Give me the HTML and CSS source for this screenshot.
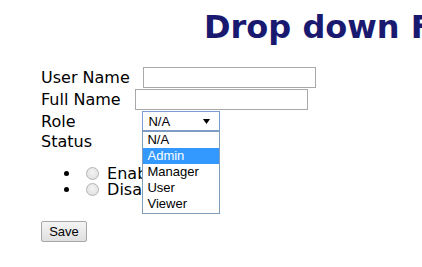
FILE: index.html
```html
<!DOCTYPE html>
<html>
<head>
<meta charset="utf-8">
<link rel="stylesheet" href="styles.css">
</head>
<body>
<div class="page">
  <h1 class="title">Drop down Form Example</h1>
  <form class="form">
    <div class="row">
      <span class="label">User Name</span>
      <input class="text-input in-user" type="text">
    </div>
    <div class="row">
      <span class="label">Full Name</span>
      <input class="text-input in-full" type="text">
    </div>
    <div class="row">
      <span class="label">Role</span>
      <div class="select-wrap">
        <div class="select">
          <span class="select-value">N/A</span>
          <svg class="select-arrow" width="7" height="5" viewBox="0 0 7 5"><polygon points="0,0 7,0 3.5,5" fill="#000"/></svg>
        </div>
        <ul class="listbox">
          <li class="option">N/A</li>
          <li class="option option-active">Admin</li>
          <li class="option">Manager</li>
          <li class="option">User</li>
          <li class="option">Viewer</li>
        </ul>
      </div>
    </div>
    <div class="row row-status">
      <span class="label">Status</span>
    </div>
    <ul class="status-list">
      <li class="status-item"><input class="radio" type="radio" name="status"> Enabled</li>
      <li class="status-item"><input class="radio" type="radio" name="status"> Disabled</li>
    </ul>
    <button class="save" type="button">Save</button>
  </form>
</div>
</body>
</html>
```

FILE: styles.css
```css
html, body {
  margin: 0;
  padding: 0;
  background: #fff;
}
body {
  font-family: "DejaVu Sans", Verdana, sans-serif;
  font-size: 16px;
  color: #000;
  overflow: hidden;
  width: 422px;
  height: 267px;
}
.page {
  padding-top: 8px;
  overflow: hidden;
}
.title {
  margin: 0;
  padding-left: 204px;
  font-size: 32px;
  font-weight: bold;
  color: #191970;
  white-space: nowrap;
  line-height: normal;
}
.form {
  margin: 20px 0 0 0;
  padding-left: 41px;
}
.row {
  display: flex;
  align-items: center;
  height: 22px;
}
.row-status {
  height: 18px;
}
.label {
  white-space: nowrap;
}
.text-input {
  box-sizing: border-box;
  width: 173px;
  height: 21px;
  border: 1px solid #a9a9a9;
  background: #fff;
  padding: 0 2px;
  margin: 0;
  outline: none;
}
.in-user { margin-left: 13px; }
.in-full { margin-left: 14px; }
.select-wrap {
  position: relative;
  margin-left: 67px;
}
.select {
  box-sizing: border-box;
  width: 78px;
  height: 20px;
  border: 1px solid #7b9bd1;
  background: #fff;
  display: flex;
  align-items: center;
  justify-content: space-between;
  padding: 0 9px 0 5px;
  font-family: "Liberation Sans", Arial, sans-serif;
  font-size: 13px;
}
.select-arrow {
  display: block;
}
.listbox {
  position: absolute;
  left: 0;
  top: 20px;
  box-sizing: border-box;
  width: 78px;
  margin: 0;
  padding: 0 0 1px 0;
  list-style: none;
  border: 1px solid #7f9db9;
  background: #fff;
  font-family: "Liberation Sans", Arial, sans-serif;
  font-size: 13px;
  z-index: 2;
}
.option {
  height: 16px;
  line-height: 16px;
  padding-left: 4px;
  color: #000;
  white-space: nowrap;
}
.option-active {
  background: #3399ff;
  color: #fff;
}
.status-list {
  margin: 16px 0 0 0;
  padding-left: 40px;
}
.status-item {
  height: 16px;
  line-height: 16px;
  white-space: nowrap;
}
.radio {
  -webkit-appearance: none;
  appearance: none;
  box-sizing: border-box;
  width: 13px;
  height: 13px;
  margin: 0 3px 0 5px;
  border: 1px solid #b4b4b4;
  border-radius: 50%;
  background: radial-gradient(circle at 50% 40%, #f4f4f4 0%, #dcdcdc 100%);
  vertical-align: -1px;
}
.save {
  display: block;
  margin-top: 23px;
  box-sizing: border-box;
  width: 46px;
  height: 21px;
  padding: 0;
  border: 1px solid #a6a6a6;
  border-radius: 2px;
  background: linear-gradient(#f4f4f4, #e0e0e0);
  font-family: "Liberation Sans", Arial, sans-serif;
  font-size: 13px;
  color: #000;
}
```
